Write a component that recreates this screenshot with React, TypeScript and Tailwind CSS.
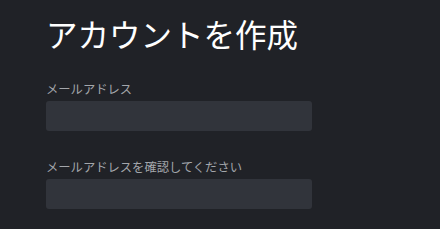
import React from "react";

export default function App() {
  return (
    <div
      className="w-[440px] h-[229px] bg-[#202227] pl-[46px] pt-[13px] overflow-hidden"
      style={{ fontFamily: '"Noto Sans CJK JP", "Noto Sans", sans-serif' }}
    >
      <h1 className="text-[31.5px] leading-[40px] text-white font-normal">アカウントを作成</h1>
      <div className="mt-[27px] flex flex-col">
        <label className="text-[12.3px] leading-[18px] text-[#a3a6ab]">メールアドレス</label>
        <div className="mt-[3px] w-[266px] h-[30px] rounded-[3px] bg-[#31343b]" />
      </div>
      <div className="mt-[27px] flex flex-col">
        <label className="text-[12.3px] leading-[18px] text-[#a3a6ab]">メールアドレスを確認してください</label>
        <div className="mt-[3px] w-[266px] h-[30px] rounded-[3px] bg-[#31343b]" />
      </div>
    </div>
  );
}
